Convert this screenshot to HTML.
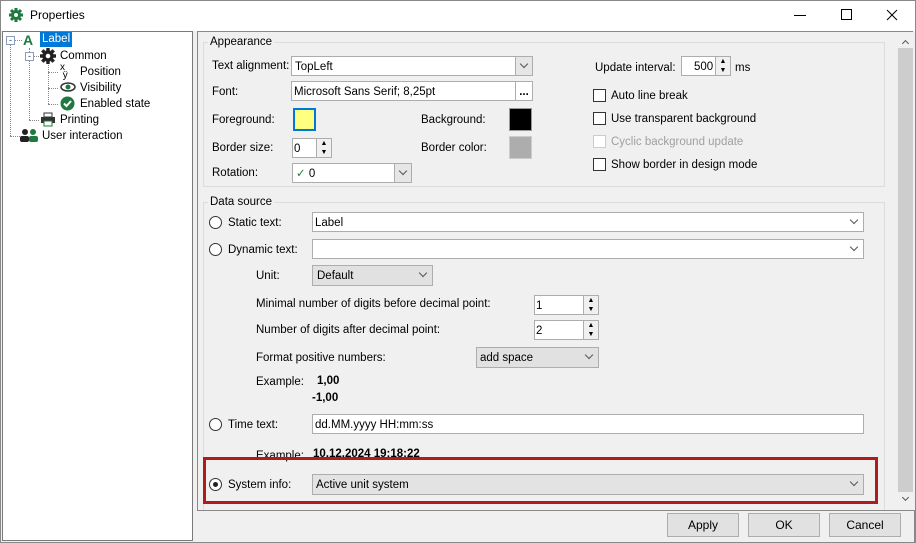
<!DOCTYPE html>
<html><head><style>
*{box-sizing:border-box;margin:0;padding:0}
body{width:916px;height:543px;background:#f0f0f0;font-family:"Liberation Sans",sans-serif;font-size:11.5px;line-height:16px;color:#000;position:relative;overflow:hidden}
.a{position:absolute;white-space:nowrap}
.box{position:absolute;background:#fff;border:1px solid #7a7a7a}
.cb{position:absolute;background:#e1e1e1;border:1px solid #adadad}
.dd{position:absolute;right:0;top:0;bottom:0;width:17px;border-left:1px solid #adadad;background:#e6e6e6}
.chev{position:absolute;width:6px;height:6px;border-right:1px solid #555;border-bottom:1px solid #555;transform:rotate(45deg)}
.grp{position:absolute;border:1px solid #dcdcdc}
.ck{position:absolute;width:13px;height:13px;border:1px solid #333;background:#fff}
.rd{position:absolute;width:13px;height:13px;border:1px solid #333;border-radius:50%;background:#fff}
.btn{position:absolute;background:#e1e1e1;border:1px solid #adadad;text-align:center;line-height:22px;font-size:12px}
.spin{position:absolute;right:0;top:0;bottom:0;width:15px;border-left:1px solid #adadad;background:#f0f0f0;font-size:7px;line-height:9px;text-align:center}
</style></head><body>
<div class="a" style="left:0;top:0;width:916px;height:31px;background:#fff;border:1px solid #888;border-bottom:none"></div>
<svg class="a" style="left:9px;top:8px" width="14" height="14" viewBox="0 0 14 14"><circle cx="7" cy="7" r="5" fill="#1e7a3e"/><g stroke="#1e7a3e" stroke-width="3"><line x1="7" y1="0" x2="7" y2="14"/><line x1="0" y1="7" x2="14" y2="7"/><line x1="2" y1="2" x2="12" y2="12"/><line x1="12" y1="2" x2="2" y2="12"/></g><circle cx="7" cy="7" r="2" fill="#fff"/></svg>
<div class="a" style="left:30px;top:7px;font-size:12px">Properties</div>
<div class="a" style="left:794px;top:15px;width:12px;height:1px;background:#000"></div>
<div class="a" style="left:841px;top:9px;width:11px;height:11px;border:1px solid #000"></div>
<svg class="a" style="left:886px;top:9px" width="12" height="12"><path d="M1 1L11 11M11 1L1 11" stroke="#000"/></svg>
<div class="a" style="left:0;top:31px;width:916px;height:512px;border:1px solid #888;border-top:none"></div>
<!-- tree -->
<div class="box" style="left:2px;top:31px;width:191px;height:510px"></div>
<div class="a" style="left:10px;top:42px;width:1px;height:94px;border-left:1px dotted #888"></div>
<div class="a" style="left:10px;top:40px;width:12px;height:1px;border-top:1px dotted #888"></div>
<div class="a" style="left:10px;top:136px;width:10px;border-top:1px dotted #888"></div>
<div class="a" style="left:29px;top:48px;width:1px;height:72px;border-left:1px dotted #888"></div>
<div class="a" style="left:29px;top:120px;width:10px;border-top:1px dotted #888"></div>
<div class="a" style="left:29px;top:56px;width:10px;border-top:1px dotted #888"></div>
<div class="a" style="left:48px;top:62px;width:1px;height:42px;border-left:1px dotted #888"></div>
<div class="a" style="left:48px;top:72px;width:10px;border-top:1px dotted #888"></div>
<div class="a" style="left:48px;top:88px;width:10px;border-top:1px dotted #888"></div>
<div class="a" style="left:48px;top:104px;width:10px;border-top:1px dotted #888"></div>
<div class="a" style="left:6px;top:36px;width:9px;height:9px;border:1px solid #8a9fc0;background:#fff;font-size:9px;line-height:6px;text-align:center;color:#334">-</div>
<div class="a" style="left:25px;top:52px;width:9px;height:9px;border:1px solid #8a9fc0;background:#fff;font-size:9px;line-height:6px;text-align:center;color:#334">-</div>
<div class="a" style="left:23px;top:32px;font-weight:bold;color:#1e7a3e;font-size:14px">A</div>
<div class="a" style="left:40px;top:32px;background:#0078d7;color:#fff;padding:0 2px;height:15px;line-height:15px">Label</div>
<svg class="a" style="left:40px;top:48px" width="16" height="16" viewBox="0 0 14 14"><circle cx="7" cy="7" r="5" fill="#222"/><g stroke="#222" stroke-width="3"><line x1="7" y1="0" x2="7" y2="14"/><line x1="0" y1="7" x2="14" y2="7"/><line x1="2" y1="2" x2="12" y2="12"/><line x1="12" y1="2" x2="2" y2="12"/></g><circle cx="7" cy="7" r="2" fill="#fff"/></svg>
<div class="a" style="left:60px;top:48px">Common</div>
<div class="a" style="left:60px;top:64px;font-size:10px;line-height:8px">x<br>&nbsp;ÿ</div>
<div class="a" style="left:80px;top:64px">Position</div>
<svg class="a" style="left:60px;top:82px" width="16" height="10"><ellipse cx="8" cy="5" rx="7" ry="4" fill="none" stroke="#333" stroke-width="1.5"/><circle cx="8" cy="5" r="2.5" fill="#1e7a3e"/></svg>
<div class="a" style="left:80px;top:80px">Visibility</div>
<svg class="a" style="left:60px;top:96px" width="15" height="15"><circle cx="7.5" cy="7.5" r="7" fill="#1e7a3e"/><path d="M4 7.5L6.5 10L11 5" stroke="#fff" stroke-width="2" fill="none"/></svg>
<div class="a" style="left:80px;top:96px">Enabled state</div>
<svg class="a" style="left:40px;top:112px" width="16" height="15"><rect x="4" y="1" width="8" height="4" fill="#fff" stroke="#333"/><rect x="1" y="5" width="14" height="6" fill="#333"/><rect x="4" y="9" width="8" height="5" fill="#fff" stroke="#1e7a3e"/></svg>
<div class="a" style="left:60px;top:112px">Printing</div>
<svg class="a" style="left:20px;top:128px" width="18" height="14"><circle cx="5" cy="4" r="3" fill="#222"/><circle cx="13" cy="4" r="3" fill="#1e7a3e"/><rect x="0" y="8" width="9" height="6" rx="2" fill="#222"/><rect x="9" y="8" width="9" height="6" rx="2" fill="#1e7a3e"/></svg>
<div class="a" style="left:42px;top:128px">User interaction</div>
<!-- right panel -->
<div class="a" style="left:197px;top:31px;width:716px;height:479px;border:1px solid #888;border-bottom:none"></div>
<div class="a" style="left:897px;top:32px;width:16px;height:478px;background:#f0f0f0"></div>
<div class="a" style="left:898px;top:48px;width:15px;height:444px;background:#cdcdcd"></div>
<div class="chev" style="left:903px;top:41px;transform:rotate(225deg);width:5px;height:5px"></div>
<div class="chev" style="left:903px;top:495px;width:5px;height:5px"></div>
<!-- appearance -->
<div class="grp" style="left:203px;top:42px;width:682px;height:145px"></div>
<div class="a" style="left:208px;top:34px;background:#f0f0f0;padding:0 2px">Appearance</div>
<div class="a" style="left:212px;top:58px">Text alignment:</div>
<div class="box" style="left:291px;top:56px;width:242px;height:20px;border-color:#adadad"><span class="a" style="left:3px;top:2px">TopLeft</span><div class="dd"><div class="chev" style="left:5px;top:4px"></div></div></div>
<div class="a" style="left:212px;top:84px">Font:</div>
<div class="box" style="left:291px;top:81px;width:242px;height:20px;border-color:#adadad"><span class="a" style="left:2px;top:2px">Microsoft Sans Serif; 8,25pt</span><div class="dd" style="background:#fff;font-weight:bold;text-align:center;line-height:20px">...</div></div>
<div class="a" style="left:212px;top:112px">Foreground:</div>
<div class="a" style="left:293px;top:108px;width:23px;height:23px;border:2px solid #0078d7;background:#ffff80"></div>
<div class="a" style="left:421px;top:112px">Background:</div>
<div class="a" style="left:509px;top:108px;width:23px;height:23px;border:1px solid #999;background:#000"></div>
<div class="a" style="left:212px;top:140px">Border size:</div>
<div class="box" style="left:292px;top:138px;width:40px;height:20px;border-color:#adadad"><span class="a" style="left:1px;top:2px">0</span><div class="spin">▲<br>▼</div></div>
<div class="a" style="left:421px;top:140px">Border color:</div>
<div class="a" style="left:509px;top:136px;width:23px;height:23px;border:1px solid #ccc;background:#adadad"></div>
<div class="a" style="left:212px;top:165px">Rotation:</div>
<div class="box" style="left:292px;top:163px;width:120px;height:20px;border-color:#adadad"><span class="a" style="left:3px;top:2px"><span style="color:#1e7a3e">✓</span> 0</span><div class="dd"><div class="chev" style="left:5px;top:4px"></div></div></div>
<div class="a" style="left:595px;top:60px">Update interval:</div>
<div class="box" style="left:681px;top:56px;width:50px;height:20px;border-color:#adadad"><span class="a" style="left:12px;top:2px">500</span><div class="spin">▲<br>▼</div></div>
<div class="a" style="left:735px;top:60px">ms</div>
<div class="ck" style="left:593px;top:89px"></div><div class="a" style="left:611px;top:88px">Auto line break</div>
<div class="ck" style="left:593px;top:112px"></div><div class="a" style="left:611px;top:111px">Use transparent background</div>
<div class="ck" style="left:593px;top:135px;border-color:#ccc"></div><div class="a" style="left:611px;top:134px;color:#a0a0a0">Cyclic background update</div>
<div class="ck" style="left:593px;top:158px"></div><div class="a" style="left:611px;top:157px">Show border in design mode</div>
<!-- data source -->
<div class="grp" style="left:203px;top:202px;width:682px;height:320px"></div>
<div class="a" style="left:208px;top:194px;background:#f0f0f0;padding:0 2px">Data source</div>
<div class="rd" style="left:209px;top:216px"></div><div class="a" style="left:228px;top:215px">Static text:</div>
<div class="box" style="left:312px;top:212px;width:552px;height:20px;border-color:#adadad"><span class="a" style="left:2px;top:2px">Label</span><div class="chev" style="right:6px;top:4px"></div></div>
<div class="rd" style="left:209px;top:243px"></div><div class="a" style="left:228px;top:242px">Dynamic text:</div>
<div class="box" style="left:312px;top:239px;width:552px;height:20px;border-color:#adadad"><div class="chev" style="right:6px;top:4px"></div></div>
<div class="a" style="left:256px;top:268px">Unit:</div>
<div class="cb" style="left:312px;top:265px;width:121px;height:21px"><span class="a" style="left:4px;top:2px">Default</span><div class="chev" style="right:6px;top:4px"></div></div>
<div class="a" style="left:256px;top:296px">Minimal number of digits before decimal point:</div>
<div class="box" style="left:534px;top:295px;width:65px;height:20px;border-color:#adadad"><span class="a" style="left:1px;top:2px">1</span><div class="spin">▲<br>▼</div></div>
<div class="a" style="left:256px;top:322px">Number of digits after decimal point:</div>
<div class="box" style="left:534px;top:320px;width:65px;height:20px;border-color:#adadad"><span class="a" style="left:1px;top:2px">2</span><div class="spin">▲<br>▼</div></div>
<div class="a" style="left:256px;top:350px">Format positive numbers:</div>
<div class="cb" style="left:476px;top:347px;width:123px;height:21px"><span class="a" style="left:3px;top:2px">add space</span><div class="chev" style="right:6px;top:4px"></div></div>
<div class="a" style="left:256px;top:374px">Example:</div>
<div class="a" style="left:317px;top:373px;font-weight:bold">1,00</div>
<div class="a" style="left:312px;top:390px;font-weight:bold">-1,00</div>
<div class="rd" style="left:209px;top:418px"></div><div class="a" style="left:228px;top:417px">Time text:</div>
<div class="box" style="left:312px;top:414px;width:552px;height:20px;border-color:#adadad"><span class="a" style="left:2px;top:2px">dd.MM.yyyy HH:mm:ss</span></div>
<div class="a" style="left:256px;top:448px">Example:</div>
<div class="a" style="left:313px;top:446px;font-weight:bold">10.12.2024 19:18:22</div>
<div class="a" style="left:203px;top:457px;width:675px;height:47px;border:3px solid #b01b1b"></div>
<div class="rd" style="left:209px;top:478px"></div><div class="a" style="left:213px;top:482px;width:5px;height:5px;border-radius:50%;background:#222"></div>
<div class="a" style="left:228px;top:477px">System info:</div>
<div class="cb" style="left:312px;top:474px;width:552px;height:21px;background:#e3e3e3"><span class="a" style="left:3px;top:2px">Active unit system</span><div class="chev" style="right:6px;top:4px"></div></div>
<!-- buttons -->
<div class="a" style="left:197px;top:510px;width:718px;height:32px;background:#f0f0f0;border-top:1px solid #888;border-right:1px solid #888"></div>
<div class="btn" style="left:667px;top:513px;width:72px;height:24px">Apply</div>
<div class="btn" style="left:748px;top:513px;width:72px;height:24px">OK</div>
<div class="btn" style="left:829px;top:513px;width:72px;height:24px">Cancel</div>
</body></html>
